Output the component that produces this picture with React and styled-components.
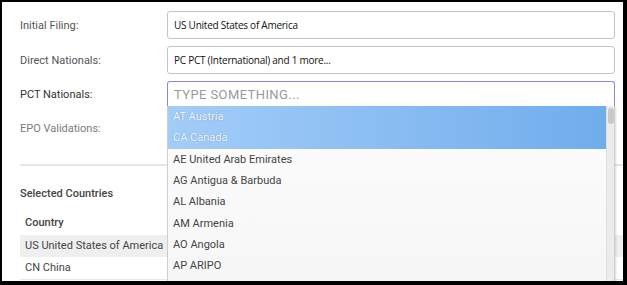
import React from 'react'
import styled, { createGlobalStyle } from 'styled-components'

const Global = createGlobalStyle`
  html, body { margin: 0; padding: 0; background: #000; }
  body { width: 627px; height: 285px; overflow: hidden; }
`

const fields = [
  { label: 'Initial Filing:', value: 'US United States of America' },
  { label: 'Direct Nationals:', value: 'PC PCT (International) and 1 more...' },
  { label: 'PCT Nationals:', placeholder: 'TYPE SOMETHING...', focused: true, dark: true },
  { label: 'EPO Validations:', value: '', faded: true },
]

const options = [
  { code: 'AT', name: 'Austria', active: true },
  { code: 'CA', name: 'Canada', active: true },
  { code: 'AE', name: 'United Arab Emirates' },
  { code: 'AG', name: 'Antigua & Barbuda' },
  { code: 'AL', name: 'Albania' },
  { code: 'AM', name: 'Armenia' },
  { code: 'AO', name: 'Angola' },
  { code: 'AP', name: 'ARIPO' },
]

const App = () => {
  return (
    <>
      <Global />
      <Frame>
        <Form>
          {fields.map((f) => (
            <Row key={f.label}>
              <Label dark={f.dark} faded={f.faded}>{f.label}</Label>
              <Field focused={f.focused}>
                {f.placeholder ? <Placeholder>{f.placeholder}</Placeholder> : f.value}
              </Field>
            </Row>
          ))}
        </Form>
        <Divider />
        <Heading>Selected Countries</Heading>
        <Table>
          <HeadCell>Country</HeadCell>
          <Cell shaded>US United States of America</Cell>
          <Cell>CN China</Cell>
        </Table>
        <Dropdown>
          <List>
            {options.map((o) => (
              <Option key={o.code} active={o.active}>
                {o.code} {o.name}
              </Option>
            ))}
          </List>
          <Scrollbar>
            <Thumb />
          </Scrollbar>
        </Dropdown>
      </Frame>
    </>
  )
}

const Frame = styled.div`
  position: relative;
  margin: 2px 0 0 2px;
  width: 621px;
  height: 279px;
  background: #fff;
  overflow: hidden;
  font-family: Roboto, "Liberation Sans", sans-serif;
`

const Form = styled.div`
  display: flex;
  flex-direction: column;
  gap: 7px;
  padding: 9px 0 0 18px;
`

const Row = styled.div`
  display: flex;
  align-items: center;
`

const Label = styled.div`
  width: 147px;
  font-size: 11px;
  color: ${(p) => (p.dark ? '#333' : p.faded ? '#7a7a7a' : '#555')};
`

const Field = styled.div`
  box-sizing: border-box;
  width: 448px;
  height: ${(p) => (p.focused ? '26px' : '28px')};
  display: flex;
  align-items: center;
  padding: 0 6px;
  border: 1px solid ${(p) => (p.focused ? '#8f86d8' : '#c4c4c4')};
  border-radius: 3px;
  font-family: "Open Sans", sans-serif;
  font-size: 10px;
  letter-spacing: -0.25px;
  color: #111;
  ${(p) => p.focused && 'border-bottom-color: #c8c8c8; border-radius: 3px 3px 0 0;'}
`

const Placeholder = styled.span`
  font-family: Roboto, sans-serif;
  font-size: 13px;
  color: #9a9a9a;
  letter-spacing: 0.4px;
`

const Divider = styled.div`
  margin: 22px 0 0 18px;
  height: 2px;
  background: #e6e6e6;
`

const Heading = styled.div`
  margin: 21px 0 0 18px;
  font-size: 11px;
  font-weight: 500;
  color: #444;
`

const Table = styled.div`
  display: flex;
  flex-direction: column;
  margin: 15px 0 0 18px;
  border-bottom: 1px solid #e8e8e8;
`

const HeadCell = styled.div`
  height: 20px;
  padding: 0 5px;
  font-size: 11px;
  font-weight: 500;
  color: #444;
  line-height: 16px;
`

const Cell = styled.div`
  height: 22px;
  line-height: 22px;
  padding: 0 5px;
  font-size: 11px;
  color: #444;
  background: ${(p) => (p.shaded ? '#efefef' : '#fff')};
`

const Dropdown = styled.div`
  position: absolute;
  left: 165px;
  top: 104px;
  width: 448px;
  height: 176px;
  box-sizing: border-box;
  display: flex;
  border: 1px solid #cfcfcf;
  border-top: none;
  background: linear-gradient(180deg, #fdfdfd, #f6f6f6);
  box-shadow: 1px 1px 2px rgba(0, 0, 0, 0.15);
`

const List = styled.div`
  flex: 1;
  display: flex;
  flex-direction: column;
`

const Option = styled.div`
  height: 21.3px;
  display: flex;
  align-items: center;
  padding: 0 5px;
  font-size: 11px;
  color: ${(p) => (p.active ? '#f4f8ff' : '#444')};
  background: ${(p) => (p.active ? 'linear-gradient(90deg, #a3cdf8, #70adec)' : 'transparent')};
  text-shadow: ${(p) => (p.active ? '0 0 1px rgba(60,90,130,0.6)' : 'none')};
`

const Scrollbar = styled.div`
  width: 7px;
  background: #ececec;
  border-left: 1px solid #e0e0e0;
  padding-top: 2px;
`

const Thumb = styled.div`
  width: 6px;
  height: 16px;
  margin: 0 auto;
  border-radius: 3px;
  background: #c9c9c9;
`

export default App
